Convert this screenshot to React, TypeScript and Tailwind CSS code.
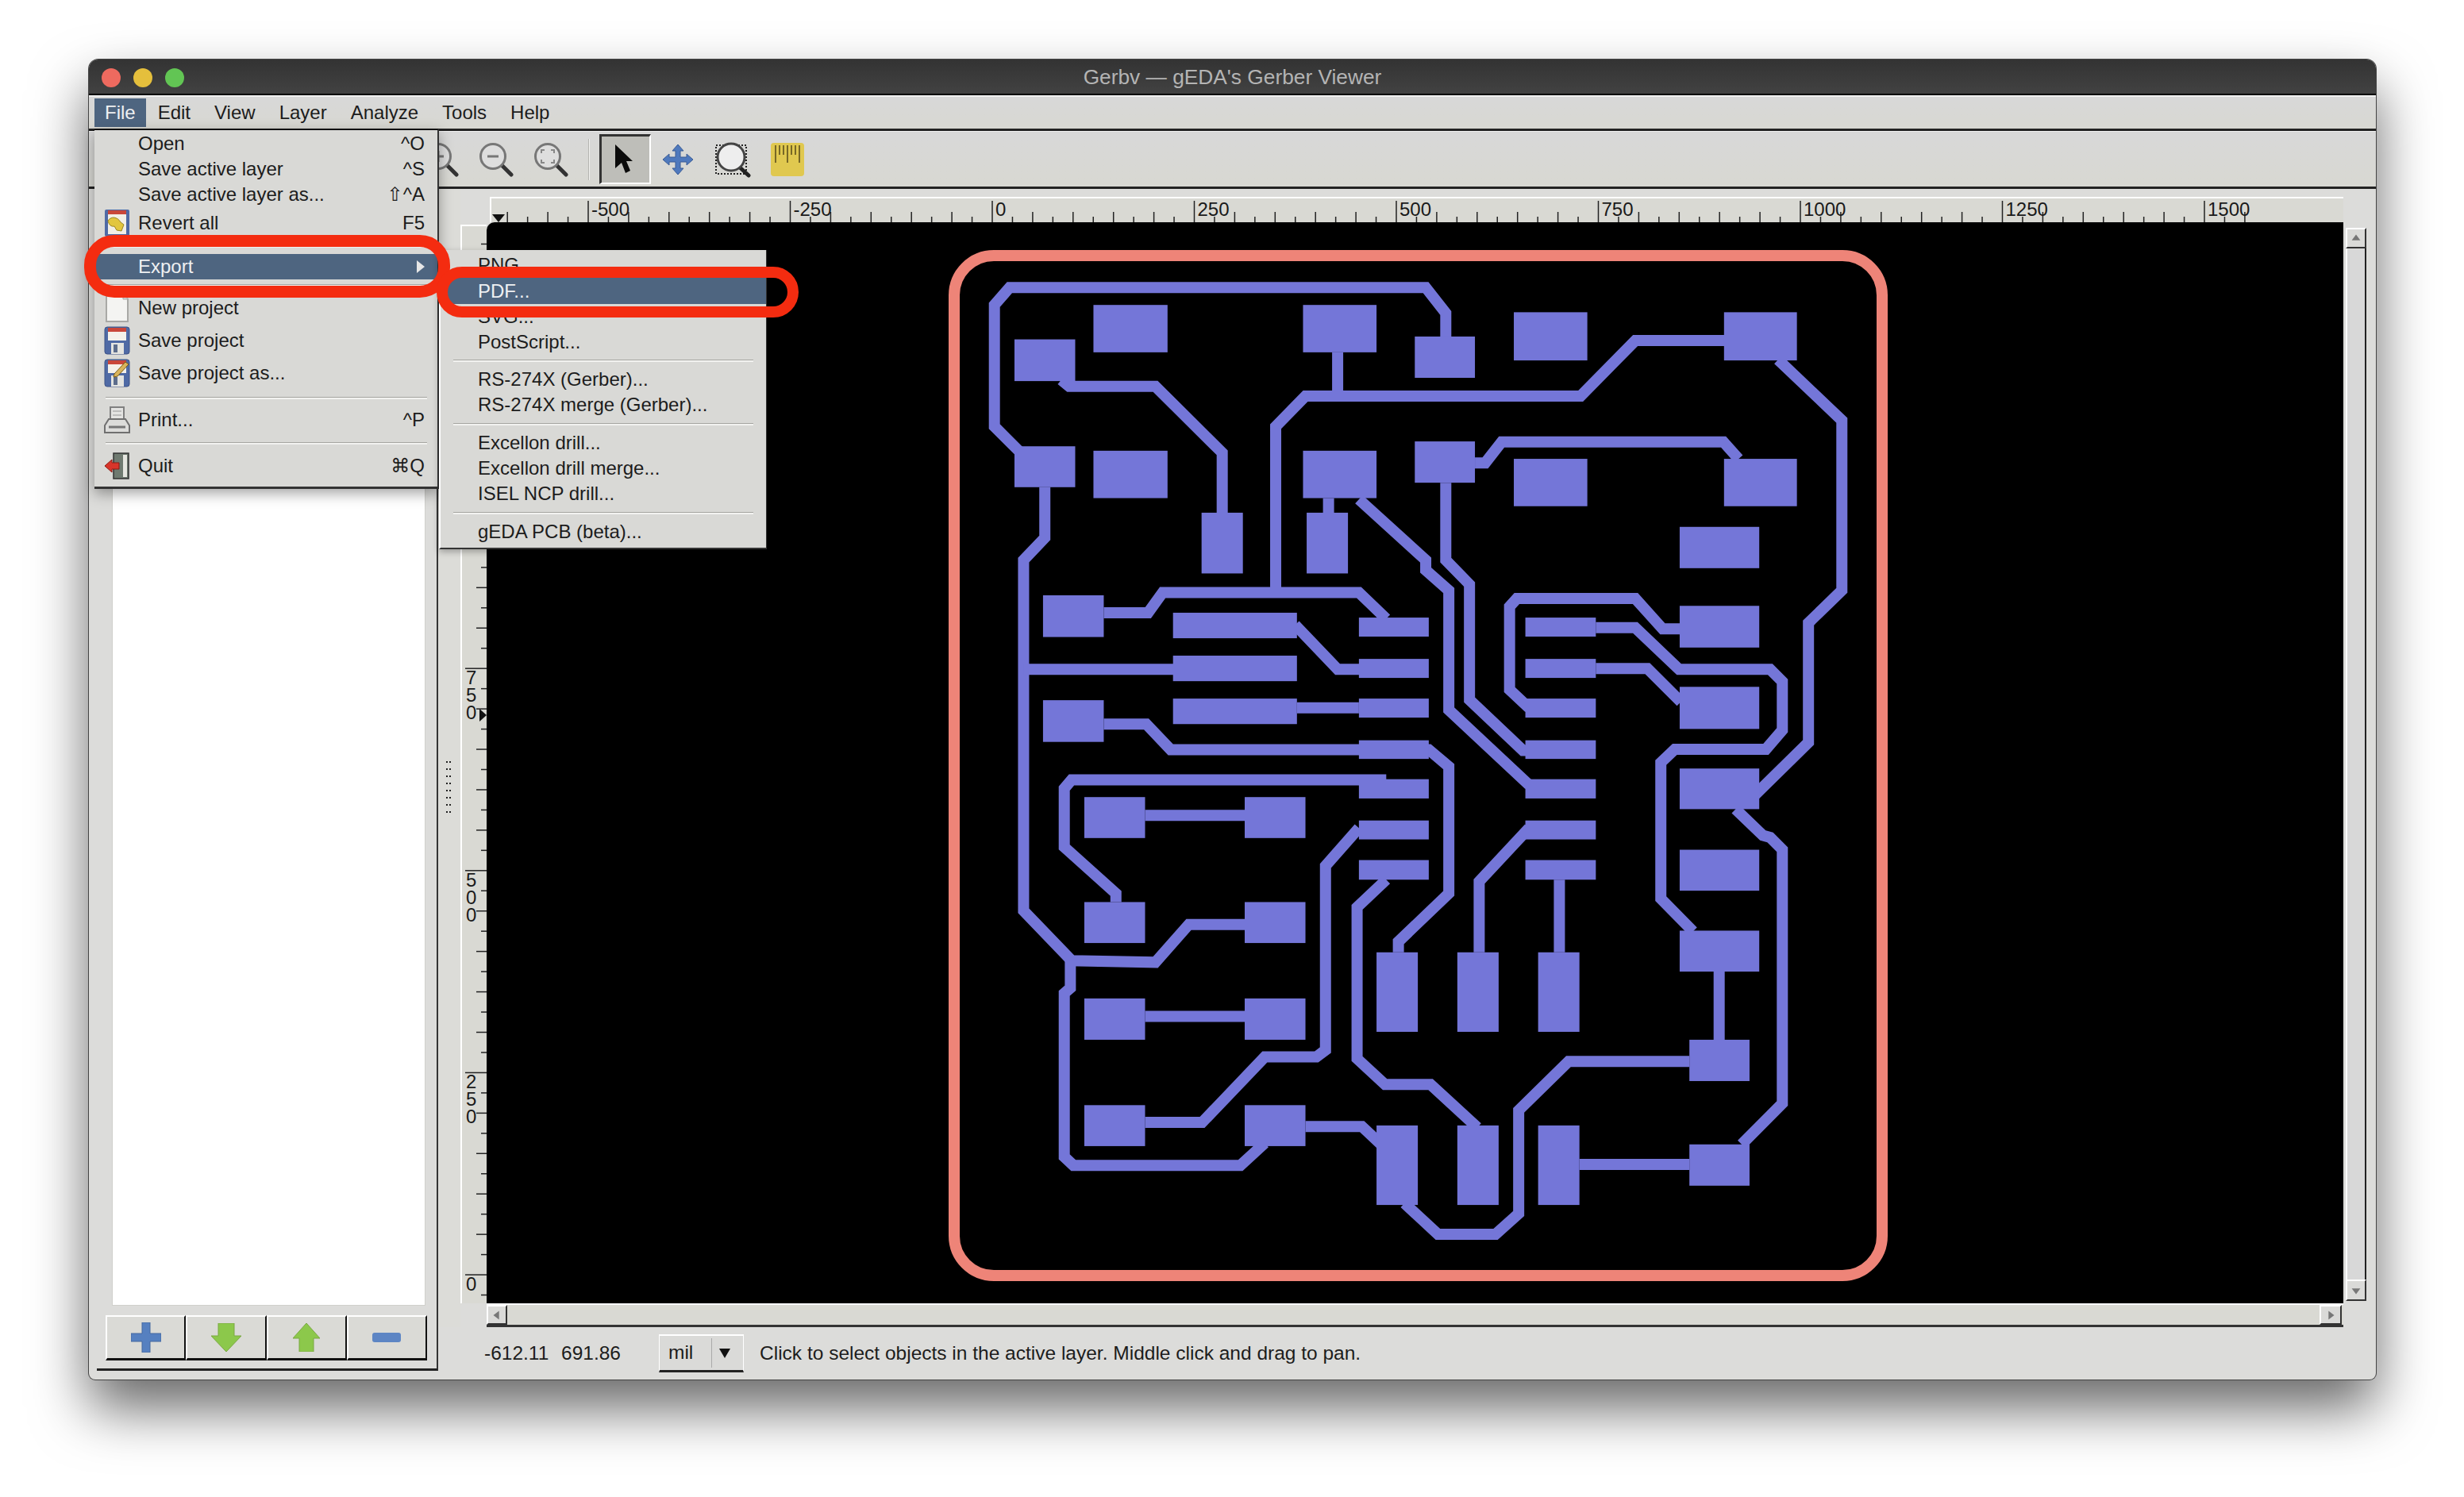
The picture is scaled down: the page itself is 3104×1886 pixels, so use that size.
import React from 'react';

type Pt = number[];

// the board was measured off two crops, so two small mappers to page pixels
const u = (x: number, y: number): Pt => [1180 + x / 1.3067, 300 + y / 1.96];
const l = (x: number, y: number): Pt => [1180 + x / 1.3067, 950 + y / 2.306];

const padsUpper = [
  [258, 165, 380, 282], [603, 165, 724, 282], [950, 183, 1071, 302], [1296, 183, 1416, 302],
  [128, 250, 228, 353], [787, 243, 886, 345], [128, 514, 228, 615], [258, 525, 380, 642],
  [603, 525, 724, 642], [787, 502, 886, 604], [950, 545, 1071, 662], [1296, 545, 1416, 662],
  [436, 678, 504, 828], [609, 678, 677, 828], [1223, 713, 1354, 815], [175, 882, 275, 985],
  [175, 1141, 275, 1244], [389, 925, 593, 988], [389, 1031, 593, 1094], [389, 1137, 593, 1200],
  [695, 937, 810, 984], [695, 1039, 810, 1086], [695, 1137, 810, 1184], [695, 1240, 810, 1286],
  [969, 937, 1085, 984], [969, 1039, 1085, 1086], [969, 1137, 1085, 1184], [969, 1240, 1085, 1286],
  [1223, 908, 1354, 1011], [1223, 1108, 1354, 1212],
];

const padsLower = [
  [695, 73, 810, 129], [695, 193, 810, 248], [695, 308, 810, 365],
  [969, 73, 1085, 129], [969, 193, 1085, 248], [969, 308, 1085, 365],
  [243, 125, 343, 244], [507, 125, 607, 244], [243, 430, 343, 549], [507, 430, 607, 549],
  [243, 710, 343, 830], [507, 710, 607, 830], [243, 1020, 343, 1139], [507, 1020, 607, 1139],
  [724, 576, 792, 807], [857, 576, 925, 807], [990, 576, 1058, 807],
  [724, 1079, 792, 1310], [857, 1079, 925, 1310], [990, 1079, 1058, 1310],
  [1223, 42, 1354, 160], [1223, 278, 1354, 397], [1223, 513, 1354, 632],
  [1239, 830, 1338, 950], [1239, 1134, 1338, 1254],
];

const traces: Pt[][] = [
  [u(135, 525), u(95, 465), u(95, 165), u(120, 122), u(805, 122), u(838, 185), u(838, 250)],
  [u(205, 350), u(218, 366), u(360, 366), u(470, 530), u(470, 680)],
  [u(660, 282), u(660, 385)],
  [u(558, 875), u(558, 465), u(607, 390), u(1060, 390), u(1150, 253), u(1300, 253)],
  [u(1385, 300), u(1490, 450), u(1490, 870), u(1435, 950), u(1435, 1245), u(1345, 1378)],
  [u(178, 615), u(178, 740), u(143, 795), l(143, 455), l(222, 600), l(360, 605), l(415, 495), l(507, 495)],
  [l(220, 600), l(220, 680), l(210, 695), l(210, 1170), l(225, 1195), l(500, 1195), l(540, 1130)],
  [u(143, 1065), u(390, 1065)],
  [u(275, 925), u(348, 925), u(372, 875), u(695, 875), u(740, 940)],
  [u(590, 955), u(660, 1065), u(700, 1065)],
  [u(593, 1160), u(695, 1160)],
  [u(275, 1200), u(345, 1200), u(385, 1263), u(810, 1263), u(843, 1305), l(843, 405), l(760, 545), l(760, 576)],
  [u(645, 642), u(645, 680)],
  [u(695, 645), u(805, 795), u(805, 820), u(843, 870), u(843, 1165), u(975, 1350)],
  [u(838, 604), u(838, 795), u(877, 855), u(877, 1140), u(965, 1265), u(980, 1265)],
  [u(886, 555), u(903, 555), u(930, 503), u(1295, 503), u(1320, 545)],
  [u(1225, 965), u(1195, 965), u(1150, 890), u(955, 890), u(943, 910), u(943, 1115), u(975, 1160)],
  [u(1085, 962), u(1150, 962), u(1222, 1065), u(1372, 1065), u(1392, 1095), u(1392, 1215), u(1365, 1262), u(1215, 1262), u(1192, 1295), l(1192, 420), l(1245, 515)],
  [u(1085, 1063), u(1170, 1063), u(1225, 1145)],
  [u(1315, 1410), u(1360, 1475), u(1372, 1480), u(1392, 1510), l(1392, 1015), l(1325, 1134)],
  [l(740, 75), l(222, 75), l(210, 100), l(210, 270), l(295, 405), l(295, 430)],
  [l(343, 178), l(507, 178)],
  [l(695, 215), l(640, 325), l(640, 860), l(625, 880), l(540, 880), l(437, 1070), l(343, 1070)],
  [l(740, 365), l(692, 445), l(692, 885), l(738, 960), l(813, 960), l(890, 1085)],
  [l(975, 215), l(893, 370), l(893, 576)],
  [l(1025, 365), l(1025, 576)],
  [l(1288, 632), l(1288, 830)],
  [l(1239, 893), l(1040, 893), l(958, 1035), l(958, 1335), l(920, 1395), l(825, 1395), l(770, 1305)],
  [l(607, 1082), l(700, 1082), l(735, 1140)],
  [l(343, 762), l(507, 762)],
  [l(1058, 1192), l(1239, 1192)],
];

function Board() {
  const rect = (p: number[], map: (x: number, y: number) => Pt, key: string) => {
    const [x0, y0] = map(p[0], p[1]);
    const [x1, y1] = map(p[2], p[3]);
    return <rect key={key} x={x0} y={y0} width={x1 - x0} height={y1 - y0} fill="#7476d8" />;
  };
  return (
    <svg viewBox="613 280 2339 1362" className="block w-full h-full">
      <rect x="1202" y="322" width="1169" height="1285" rx="50" fill="none" stroke="#ee8478" strokeWidth="14" />
      {traces.map((t, i) => (
        <polyline key={i} points={t.map((p) => p.join(',')).join(' ')} fill="none" stroke="#7476d8" strokeWidth="14" />
      ))}
      {padsUpper.map((p, i) => rect(p, u, `u${i}`))}
      {padsLower.map((p, i) => rect(p, l, `l${i}`))}
    </svg>
  );
}

function HRuler() {
  const ticks = Array.from({ length: 87 }, (_, i) => i - 4);
  const labels = ['-500', '-250', '0', '250', '500', '750', '1000', '1250', '1500'];
  return (
    <svg viewBox="619 250 2333 30" className="block w-full h-full">
      {ticks.map((i) => {
        const x = 741 + i * 25.45;
        const top = i % 10 === 0 ? 253 : i % 2 === 0 ? 267 : 273;
        return <line key={i} x1={x} x2={x} y1={top} y2={280} stroke="#222" strokeWidth="1.5" />;
      })}
      {labels.map((t, i) => (
        <text key={t} x={745 + i * 254.5} y="272" fontSize="24" fill="#1a1a1a" fontFamily="'Liberation Sans', sans-serif">
          {t}
        </text>
      ))}
      <polygon points="620,270 636,270 628,280" fill="#111" />
    </svg>
  );
}

function VRuler() {
  const ticks = Array.from({ length: 53 }, (_, i) => i - 1);
  const labels = ['750', '500', '250', '0'];
  return (
    <svg viewBox="582 283 31 1359" className="block w-full h-full">
      {ticks.map((i) => {
        const y = 1606 - i * 25.5;
        const left = i % 10 === 0 ? 586 : i % 2 === 0 ? 600 : 606;
        return <line key={i} x1={left} x2={613} y1={y} y2={y} stroke="#222" strokeWidth="1.5" />;
      })}
      {labels.map((t, i) =>
        t.split('').map((c, j) => (
          <text key={`${t}${j}`} x="587" y={861 + i * 255 + j * 22} fontSize="24" fill="#1a1a1a" fontFamily="'Liberation Sans', sans-serif">
            {c}
          </text>
        )),
      )}
      <polygon points="604,892 613,900 604,908" fill="#111" />
    </svg>
  );
}

function Lens({ children }: { children?: React.ReactNode }) {
  return (
    <svg viewBox="0 0 44 44" className="w-[44px] h-[44px] mr-[25px] shrink-0">
      <line x1="28" y1="28" x2="41" y2="41" stroke="#333" strokeWidth="5" strokeLinecap="round" />
      <circle cx="18" cy="18" r="15.5" fill="#dedede" stroke="#777" strokeWidth="3" />
      {children}
    </svg>
  );
}

function IconBox({ children }: { children?: React.ReactNode }) {
  return (
    <svg viewBox="0 0 33 36" className="w-[33px] h-[36px]">
      {children}
    </svg>
  );
}

// blue floppy with the red band along the top, used by both save entries
const floppy = (
  <>
    <rect x="1" y="1" width="31" height="34" rx="3" fill="#4f6aa5" stroke="#3d5286" strokeWidth="1" />
    <rect x="5" y="2" width="23" height="5" fill="#c9473a" />
    <rect x="5" y="7" width="23" height="11" fill="#f4f1ea" />
    <rect x="9" y="21" width="16" height="14" fill="#e4e4e0" />
    <rect x="12" y="23" width="5" height="10" fill="#5d6d8c" />
  </>
);

const menuIcons: Record<string, React.ReactNode> = {
  revert: (
    <IconBox>
      <rect x="1" y="1" width="31" height="34" rx="2" fill="#4f6aa5" />
      <rect x="5" y="2" width="23" height="5" fill="#c9473a" />
      <rect x="5" y="7" width="23" height="25" fill="#f2efe6" />
      <path d="M5 15c4-6 12-5 16 2l4 3-3 8-6-1-3-5c-4 1-7-2-8-7z" fill="#e2c63e" stroke="#9a8420" strokeWidth="1" />
    </IconBox>
  ),
  newp: (
    <IconBox>
      <path d="M3 1h21l6 6v28H3z" fill="#f4f4f2" stroke="#a9a9a6" strokeWidth="2" />
      <path d="M24 1v6h6" fill="#d0d0d0" stroke="#a9a9a6" strokeWidth="1" />
    </IconBox>
  ),
  save: <IconBox>{floppy}</IconBox>,
  saveas: (
    <IconBox>
      {floppy}
      <path d="M13 19L27 4l4 3-14 15-5 1z" fill="#d9b45c" stroke="#7a5b10" strokeWidth="1" />
    </IconBox>
  ),
  print: (
    <IconBox>
      <path d="M8 19V2h17v17" fill="#e4e4e2" stroke="#808080" strokeWidth="2" />
      <path d="M11 7h11M11 12h11" stroke="#b0b0b0" strokeWidth="1.5" />
      <path d="M6 17h21l5 8v9H1v-9z" fill="#dcdcda" stroke="#707070" strokeWidth="2" />
      <line x1="6" y1="27" x2="27" y2="27" stroke="#777" strokeWidth="3" />
    </IconBox>
  ),
  quit: (
    <IconBox>
      <rect x="12" y="2" width="19" height="32" fill="#6f7a70" stroke="#333" strokeWidth="1.5" />
      <rect x="24" y="4" width="5" height="28" fill="#e6e6e0" />
      <path d="M1 18l9-8v4h9v8h-9v4z" fill="#d8352a" stroke="#8c1a12" strokeWidth="1" />
    </IconBox>
  ),
};

interface Entry {
  label?: string;
  shortcut?: string;
  icon?: string;
  active?: boolean;
  arrow?: boolean;
  h: string;
}

const fileMenu: Entry[] = [
  { label: 'Open', shortcut: '^O', h: 'h-[32px]' },
  { label: 'Save active layer', shortcut: '^S', h: 'h-[32px]' },
  { label: 'Save active layer as...', shortcut: '⇧^A', h: 'h-[32px]' },
  { label: 'Revert all', shortcut: 'F5', icon: 'revert', h: 'h-[39px]' },
  { h: 'h-[20px]' },
  { label: 'Export', active: true, arrow: true, h: 'h-[32px]' },
  { h: 'h-[15px]' },
  { label: 'New project', icon: 'newp', h: 'h-[41px]' },
  { label: 'Save project', icon: 'save', h: 'h-[41px]' },
  { label: 'Save project as...', icon: 'saveas', h: 'h-[42px]' },
  { h: 'h-[20px]' },
  { label: 'Print...', shortcut: '^P', icon: 'print', h: 'h-[35px]' },
  { h: 'h-[24px]' },
  { label: 'Quit', shortcut: '⌘Q', icon: 'quit', h: 'h-[33px]' },
];

const exportMenu: Entry[] = [
  { label: 'PNG...', h: 'h-[33px]' },
  { label: 'PDF...', active: true, h: 'h-[33px]' },
  { label: 'SVG...', h: 'h-[32px]' },
  { label: 'PostScript...', h: 'h-[31px]' },
  { h: 'h-[16px]' },
  { label: 'RS-274X (Gerber)...', h: 'h-[32px]' },
  { label: 'RS-274X merge (Gerber)...', h: 'h-[32px]' },
  { h: 'h-[16px]' },
  { label: 'Excellon drill...', h: 'h-[32px]' },
  { label: 'Excellon drill merge...', h: 'h-[32px]' },
  { label: 'ISEL NCP drill...', h: 'h-[32px]' },
  { h: 'h-[16px]' },
  { label: 'gEDA PCB (beta)...', h: 'h-[32px]' },
];

function MenuRow({ e, sub }: { e: Entry; sub?: boolean }) {
  if (!e.label) {
    return (
      <div className={`${e.h} flex items-center ${sub ? 'px-[16px]' : 'pl-[14px] pr-[13px]'}`}>
        <div className="w-full h-[3px] border-t border-[#a5a5a1] bg-[#f2f2f0]" />
      </div>
    );
  }
  return (
    <div
      className={`${e.h} flex items-center relative ${
        sub ? 'pl-[47px]' : 'pl-[55px]'
      } pr-[16px] ${e.active ? 'bg-[#4e6580] text-[#eef0f2]' : 'text-[#1c1c1c]'}`}
    >
      {e.icon && <span className="absolute left-[12px] top-1/2 -translate-y-1/2 flex">{menuIcons[e.icon]}</span>}
      <span className="flex-1">{e.label}</span>
      {e.shortcut && <span>{e.shortcut}</span>}
      {e.arrow && (
        <svg viewBox="0 0 10 16" className="w-[10px] h-[16px] text-[#e6e6e6]">
          <path d="M0 0l10 8-10 8z" fill="currentColor" />
        </svg>
      )}
    </div>
  );
}

function ArrowBtn({ dir }: { dir: 'up' | 'down' | 'left' | 'right' }) {
  const pts = {
    up: '4,13 16,13 10,5',
    down: '4,7 16,7 10,15',
    left: '13,4 13,16 5,10',
    right: '7,4 7,16 15,10',
  }[dir];
  return (
    <div className="w-full h-full flex items-center justify-center bg-[#dadad8] border-t-2 border-l-2 border-white border-b-2 border-r-2 border-b-[#333] border-r-[#333]">
      <svg viewBox="0 0 20 20" className="w-[18px] h-[18px]">
        <polygon points={pts} fill="#777" />
      </svg>
    </div>
  );
}

const layerButtons = [
  <svg key="add" viewBox="0 0 38 38" className="w-[38px] h-[38px]">
    <path d="M14 0h10v14h14v10H24v14H14V24H0V14h14z" fill="#5680c0" stroke="#45699f" strokeWidth="1" />
  </svg>,
  <svg key="down" viewBox="0 0 38 36" className="w-[38px] h-[36px]">
    <path d="M9 0h20v16h9L19 36 0 16h9z" fill="#8cc84b" stroke="#7aa843" strokeWidth="1" />
  </svg>,
  <svg key="up" viewBox="0 0 34 36" className="w-[34px] h-[36px]">
    <path d="M8 36h18V19h8L17 0 0 19h8z" fill="#8cc84b" stroke="#7aa843" strokeWidth="1" />
  </svg>,
  <svg key="rm" viewBox="0 0 36 12" className="w-[36px] h-[12px]">
    <rect width="36" height="12" rx="3" fill="#5d85c4" />
  </svg>,
];

export default function App() {
  return (
    <div className="w-[3104px] h-[1886px] overflow-hidden bg-white pt-[75px] pl-[112px] font-['Liberation_Sans','DejaVu_Sans',sans-serif]">
      <div className="relative w-[2881px] h-[1663px] flex flex-col rounded-t-[12px] rounded-b-[8px] bg-[#dcdcda] shadow-[0_0_0_1px_#444,0_36px_70px_rgba(0,0,0,0.6)] text-[24px] text-[#1c1c1c]">
        {/* Title bar */}
        <div className="relative h-[45px] shrink-0 pt-[3px] flex items-center justify-center rounded-t-[12px] bg-gradient-to-b from-[#333] to-[#424242] border-b-2 border-black">
          <div className="absolute left-[16px] top-[11px] flex gap-[16px]">
            <span className="w-[24px] h-[24px] rounded-full bg-[#ee6a5f]" />
            <span className="w-[24px] h-[24px] rounded-full bg-[#e5bf3c]" />
            <span className="w-[24px] h-[24px] rounded-full bg-[#62c554]" />
          </div>
          <span className="text-[26.3px] text-[#b4b4b4]">Gerbv — gEDA's Gerber Viewer</span>
        </div>

        {/* Menu bar */}
        <div className="h-[45px] shrink-0 flex items-start pl-[7px] pt-[2px] bg-gradient-to-b from-[#d8d8d8] to-[#d8d8d2] border-t-2 border-[#f0f0f0] border-b-[3px] border-b-[#222]">
          <span className="h-[36px] px-[13px] flex items-center bg-[#4e6580] text-[#eef0f2]">File</span>
          {['Edit', 'View', 'Layer', 'Analyze', 'Tools', 'Help'].map((m) => (
            <span key={m} className="h-[36px] px-[15px] flex items-center">
              {m}
            </span>
          ))}
        </div>

        {/* Toolbar */}
        <div className="h-[73px] shrink-0 flex items-center pl-[422px] bg-gradient-to-b from-[#d8d8d8] to-[#d8d8d2] border-t border-[#f0f0f0] border-b-[3px] border-b-[#222]">
          <Lens>
            <path d="M11 18h14M18 11v14" stroke="#777" strokeWidth="3" />
          </Lens>
          <Lens>
            <path d="M11 18h14" stroke="#777" strokeWidth="3" />
          </Lens>
          <Lens>
            <path d="M10 14v-4h4M22 10h4v4M26 22v4h-4M14 26h-4v-4" fill="none" stroke="#888" strokeWidth="2" />
          </Lens>
          <div className="w-[2px] h-[52px] bg-[#f0f0ee] border-l border-[#b5b5b1]" />
          <div className="ml-[12px] w-[65px] h-[63px] flex items-center justify-center bg-[#bebeb9] border-t-[3px] border-l-[3px] border-[#333] border-r-2 border-b-2 border-r-white border-b-white">
            <svg viewBox="0 0 24 40" className="w-[24px] h-[40px] -ml-[6px]">
              <path d="M2 1v30l8-7 5 13 6-3-5-12h8z" fill="#0b0b0b" />
            </svg>
          </div>
          <svg viewBox="0 0 38 38" className="ml-[15px] w-[38px] h-[38px]">
            <path d="M19 0l7 8h-4v8h8v-4l8 7-8 7v-4h-8v8h4l-7 8-7-8h4v-8H8v4l-8-7 8-7v4h8V8h-4z" fill="#4f79bd" stroke="#3b5c95" strokeWidth="1" />
          </svg>
          <svg viewBox="0 0 46 46" className="ml-[27px] w-[46px] h-[46px]">
            <rect x="2" y="5" width="38" height="36" fill="none" stroke="#222" strokeWidth="2" strokeDasharray="2 2" />
            <line x1="31" y1="32" x2="43" y2="43" stroke="#222" strokeWidth="5" strokeLinecap="round" />
            <circle cx="21" cy="20" r="17" fill="#eeeeee" stroke="#444" strokeWidth="3" />
          </svg>
          <svg viewBox="0 0 42 42" className="ml-[25px] w-[42px] h-[42px]">
            <rect width="42" height="42" rx="4" fill="#e0c84f" />
            <path d="M6 3v22M11 3v12M16 3v12M21 3v22M26 3v12M31 3v12M36 3v22" stroke="#55481a" strokeWidth="1.5" />
          </svg>
        </div>

        {/* Body */}
        <div className="flex-1 min-h-0 flex">
          {/* Layer panel */}
          <div className="w-[440px] shrink-0 flex flex-col pl-[10px] pb-[11px]">
            <div className="flex-1 min-h-0 flex flex-col border-b-[3px] border-[#222] border-r-2 border-r-[#333]">
              <div className="flex-1 mt-[20px] ml-[19px] mr-[14px] bg-white border border-[#d0d0cc]" />
              <div className="mt-[12px] mb-[10px] ml-[11px] mr-[12px] flex">
                {layerButtons.map((b, i) => (
                  <div key={i} className="flex-1 h-[57px] flex items-center justify-center bg-[#dadad6] border-t-2 border-l-2 border-white border-r-2 border-r-[#111] border-b-[3px] border-b-[#111]">
                    {b}
                  </div>
                ))}
              </div>
            </div>
          </div>

          {/* Drawing side */}
          <div className="flex-1 min-w-0 flex flex-col">
            <div className="flex-1 min-h-0 flex">
              <div className="w-[28px] shrink-0 flex items-center justify-center bg-[#dcdcd8]">
                <svg viewBox="0 0 10 68" className="w-[10px] h-[68px] mt-[72px]">
                  {[0, 1, 2, 3, 4, 5, 6, 7].map((i) => (
                    <line key={i} x1="1" x2="9" y1={3 + i * 9} y2={3 + i * 9} stroke="#222" strokeWidth="2" strokeDasharray="2 2" />
                  ))}
                </svg>
              </div>
              <div className="flex-1 min-w-0 grid grid-cols-[33px_2339px_1fr] grid-rows-[10px_32px_1362px_30px]">
                <div className="col-span-3" />
                <div />
                <div className="ml-[4px] bg-[#d9d9d3] border-t-2 border-l-2 border-white">
                  <HRuler />
                </div>
                <div />
                <div className="mt-[3px] bg-[#d9d9d3] border-t-2 border-l-2 border-white">
                  <VRuler />
                </div>
                <div className="bg-black rounded-tl-[10px] overflow-hidden">
                  <Board />
                </div>
                <div className="flex flex-col pl-[3px] pt-[7px] pb-[3px] pr-[12px]">
                  <div className="h-[26px] shrink-0">
                    <ArrowBtn dir="up" />
                  </div>
                  <div className="flex-1 bg-[#d8d8d8] border-l-2 border-white border-r-2 border-r-[#222]" />
                  <div className="h-[27px] shrink-0">
                    <ArrowBtn dir="down" />
                  </div>
                </div>
                <div />
                <div className="flex bg-[#d9d9d3] border-t-2 border-t-white border-b-[3px] border-b-[#333] pr-[2px]">
                  <div className="w-[26px] shrink-0">
                    <ArrowBtn dir="left" />
                  </div>
                  <div className="flex-1" />
                  <div className="w-[28px] shrink-0">
                    <ArrowBtn dir="right" />
                  </div>
                </div>
                <div />
              </div>
            </div>
            {/* Status bar */}
            <div className="h-[66px] shrink-0 flex items-center pl-[58px] text-[24.5px]">
              <span className="w-[97px]">-612.11</span>
              <span className="w-[123px]">691.86</span>
              <div className="w-[107px] h-[48px] flex items-center bg-[#dadad8] border-t-2 border-l border-r border-white border-b-[3px] border-b-[#222]">
                <span className="w-[66px] pl-[11px] border-r border-[#aaa]">mil</span>
                <svg viewBox="0 0 14 14" className="ml-[9px] w-[14px] h-[14px]">
                  <polygon points="0,1 14,1 7,13" fill="#111" />
                </svg>
              </div>
              <span className="ml-[20px]">Click to select objects in the active layer. Middle click and drag to pan.</span>
            </div>
          </div>
        </div>

        {/* Open menus, over the window */}
        <div className="absolute left-[7px] top-[87px] w-[434px] h-[454px] pt-[1px] bg-[#d9d9d6] border-t-2 border-[#111] border-b-[3px] border-b-[#333] border-r-2 border-r-[#333] shadow-[0_6px_16px_rgba(0,0,0,0.35)]">
          {fileMenu.map((e, i) => (
            <MenuRow key={i} e={e} />
          ))}
        </div>
        <div className="absolute left-[441px] top-[240px] w-[413px] h-[377px] pt-[2px] bg-[#d9d9d6] border-l-2 border-l-white border-b-2 border-b-[#333] border-r border-r-[#333] shadow-[0_3px_8px_rgba(0,0,0,0.3)]">
          {exportMenu.map((e, i) => (
            <MenuRow key={i} e={e} sub />
          ))}
        </div>

        {/* Red call-outs drawn over the screenshot */}
        <div className="absolute left-[-6px] top-[221px] w-[461px] h-[79px] rounded-[38px] border-[15px] border-[#f42c10]" />
        <div className="absolute left-[438px] top-[261px] w-[456px] h-[64px] rounded-[32px] border-[14px] border-[#f42c10]" />
      </div>
    </div>
  );
}
